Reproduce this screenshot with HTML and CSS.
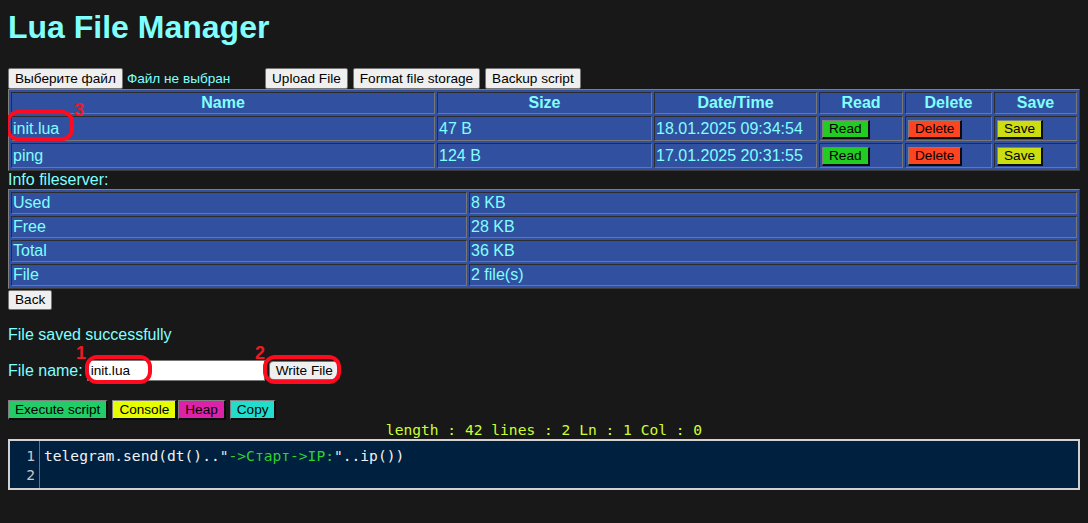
FILE: index.html
```html
<!DOCTYPE html>
<html lang="ru">
<head>
<meta charset="utf-8">
<title>Lua File Manager</title>
<link rel="stylesheet" href="styles.css">
</head>
<body>
<h1 class="title">Lua File Manager</h1>

<div class="toolbar">
  <div class="file-pick"><button class="btn">Выберите файл</button><span class="file-none">Файл не выбран</span></div>
  <button class="btn">Upload File</button>
  <button class="btn">Format file storage</button>
  <button class="btn">Backup script</button>
</div>

<table class="grid files">
  <thead>
    <tr>
      <th class="w-name">Name</th>
      <th class="w-size">Size</th>
      <th class="w-date">Date/Time</th>
      <th class="w-read">Read</th>
      <th class="w-del">Delete</th>
      <th>Save</th>
    </tr>
  </thead>
  <tbody>
    <tr>
      <td>init.lua</td>
      <td>47 B</td>
      <td>18.01.2025 09:34:54</td>
      <td><button class="cbtn green">Read</button></td>
      <td><button class="cbtn red">Delete</button></td>
      <td><button class="cbtn yellow">Save</button></td>
    </tr>
    <tr>
      <td>ping</td>
      <td>124 B</td>
      <td>17.01.2025 20:31:55</td>
      <td><button class="cbtn green">Read</button></td>
      <td><button class="cbtn red">Delete</button></td>
      <td><button class="cbtn yellow">Save</button></td>
    </tr>
  </tbody>
</table>

<div class="info-title">Info fileserver:</div>
<table class="grid info">
  <tbody>
    <tr><td class="w-key">Used</td><td>8 KB</td></tr>
    <tr><td>Free</td><td>28 KB</td></tr>
    <tr><td>Total</td><td>36 KB</td></tr>
    <tr><td>File</td><td>2 file(s)</td></tr>
  </tbody>
</table>

<div class="back-row"><button class="btn back">Back</button></div>

<p class="msg">File saved successfully</p>

<div class="name-row">
  <label class="name-label" for="fname">File name:</label>
  <input class="name-input" id="fname" type="text" value="init.lua">
  <button class="btn write">Write File</button>
</div>

<div class="actions">
  <button class="cbtn tall exec">Execute script</button>
  <button class="cbtn tall console">Console</button>
  <button class="cbtn tall heap">Heap</button>
  <button class="cbtn tall copy">Copy</button>
</div>

<div class="status">length : 42 lines : 2 Ln : 1 Col : 0</div>

<div class="editor">
  <div class="gutter"><div>1</div><div>2</div></div>
  <div class="code"><div>telegram.send(dt()..<span class="q">"</span><span class="str">-&gt;Старт-&gt;IP:</span><span class="q">"</span>..ip())</div><div>&nbsp;</div></div>
</div>

<div class="mark ring ring-3"></div>
<div class="mark num num-3">3</div>
<div class="mark ring ring-1"></div>
<div class="mark num num-1">1</div>
<div class="mark ring ring-2"></div>
<div class="mark num num-2">2</div>
</body>
</html>
```

FILE: styles.css
```css
* { box-sizing: border-box; }

html { background: #181818; }

body {
  margin: 8px;
  position: relative;
  font-family: "Liberation Sans", Arial, sans-serif;
  font-size: 16px;
  color: #80ffff;
  background: #181818;
}

.title {
  margin: 0 0 22px;
  font-size: 32px;
  line-height: 38px;
  font-weight: bold;
  color: #80ffff;
}

/* generic grey buttons */
.btn {
  font-family: "Liberation Sans", Arial, sans-serif;
  font-size: 13.6px;
  color: #000;
  background: #efefef;
  border: 1px solid #767676;
  border-radius: 2px;
  padding: 0 6px;
  height: 21px;
  line-height: 19px;
  margin: 0;
}

.toolbar {
  display: flex;
  align-items: flex-start;
  height: 21px;
  gap: 5px;
}

.file-pick {
  width: 252px;
  display: flex;
  align-items: center;
}

.file-none {
  font-size: 13.6px;
  margin-left: 4px;
  color: #80ffff;
}

/* tables */
.grid {
  width: 100%;
  table-layout: fixed;
  border-collapse: separate;
  border-spacing: 2px;
  background: #3151a0;
  border: 1px solid;
  border-color: #808080 #3a3a3a #3a3a3a #808080;
}

.grid th,
.grid td {
  border: 1px solid;
  border-color: #2c2c2c #777777 #777777 #2c2c2c;
  padding: 0 1px;
  color: #80ffff;
  font-size: 16px;
  font-weight: normal;
  text-align: left;
  line-height: 20px;
  white-space: nowrap;
  vertical-align: middle;
}

.grid th {
  font-weight: bold;
  text-align: center;
}

.files td { line-height: 23px; }

.w-name { width: 424px; }
.w-size { width: 215px; }
.w-date { width: 163px; }
.w-read { width: 84px; }
.w-del { width: 87px; }
.w-key { width: 456px; }

/* coloured action buttons */
.cbtn {
  font-family: "Liberation Sans", Arial, sans-serif;
  font-size: 13.6px;
  color: #000;
  padding: 0 6px;
  margin: 0 0 0 1px;
  height: 19px;
  line-height: 16px;
  border-style: solid;
  border-width: 1px 2px 2px 1px;
  border-color: #808080 #0c0c0c #0c0c0c #808080;
  border-radius: 0;
  vertical-align: middle;
}

.green { background: #22cc22; }
.red { background: #ff4422; }
.yellow { background: #ccdd11; }

.info-title {
  line-height: 18px;
  color: #80ffff;
}

.back-row { margin-top: 1px; height: 20px; }
.back { height: 20px; line-height: 18px; }

.msg {
  margin: 16px 0;
  line-height: 18px;
  color: #80ffff;
}

.name-row {
  display: flex;
  align-items: center;
  height: 21px;
}

.name-label { color: #80ffff; line-height: 18px; }

.name-input {
  margin: 0 0 0 4px;
  width: 178px;
  height: 21px;
  border: 1px solid #767676;
  background: #fff;
  padding: 0 3px;
  font-family: "Liberation Sans", Arial, sans-serif;
  font-size: 13.6px;
  color: #000;
}

.write {
  margin-left: 4px;
  height: 19px;
  line-height: 17px;
  border-radius: 4px;
}

.actions {
  display: flex;
  margin-top: 19px;
  height: 20px;
}

.cbtn.tall { height: 20px; line-height: 17px; margin: 0; }
.exec { background: #22cc66; }
.console { background: #e6ff00; margin-left: 4px !important; }
.heap { background: #dd22aa; margin-left: 1px !important; }
.copy { background: #22ddcc; margin-left: 4px !important; }

.status {
  text-align: center;
  font-family: "DejaVu Sans Mono", "Liberation Mono", monospace;
  font-size: 14.6px;
  line-height: 19px;
  color: #ccff33;
}

.editor {
  display: flex;
  height: 51px;
  border: 2px solid #d2d2d2;
  background: #00203f;
  font-family: "DejaVu Sans Mono", "Liberation Mono", monospace;
  font-size: 14.6px;
  line-height: 18.5px;
}

.gutter {
  width: 30px;
  padding: 6px 4px 0 0;
  border-right: 1px solid #6a7080;
  text-align: right;
  color: #c8c8c8;
}

.code {
  padding: 6px 0 0 4px;
  color: #f2f2f2;
  white-space: pre;
}

.code .str { color: #2fd02f; }
.code .q { color: #dfe8e0; }

/* red annotation marks drawn over the screenshot */
.mark { position: absolute; pointer-events: none; }

.ring {
  border: 4px solid #ff0a1e;
  border-radius: 12px;
}

.num {
  font-family: "Liberation Sans", Arial, sans-serif;
  font-weight: bold;
  font-size: 18px;
  line-height: 18px;
  color: #e81c24;
}

.ring-3 { left: -2px; top: 102px; width: 68px; height: 31px; }
.num-3 { left: 66px; top: 93px; }

.ring-1 { left: 77px; top: 347px; width: 67px; height: 29px; }
.num-1 { left: 68px; top: 336px; }

.ring-2 { left: 255px; top: 347px; width: 78px; height: 29px; }
.num-2 { left: 247px; top: 336px; }
```
